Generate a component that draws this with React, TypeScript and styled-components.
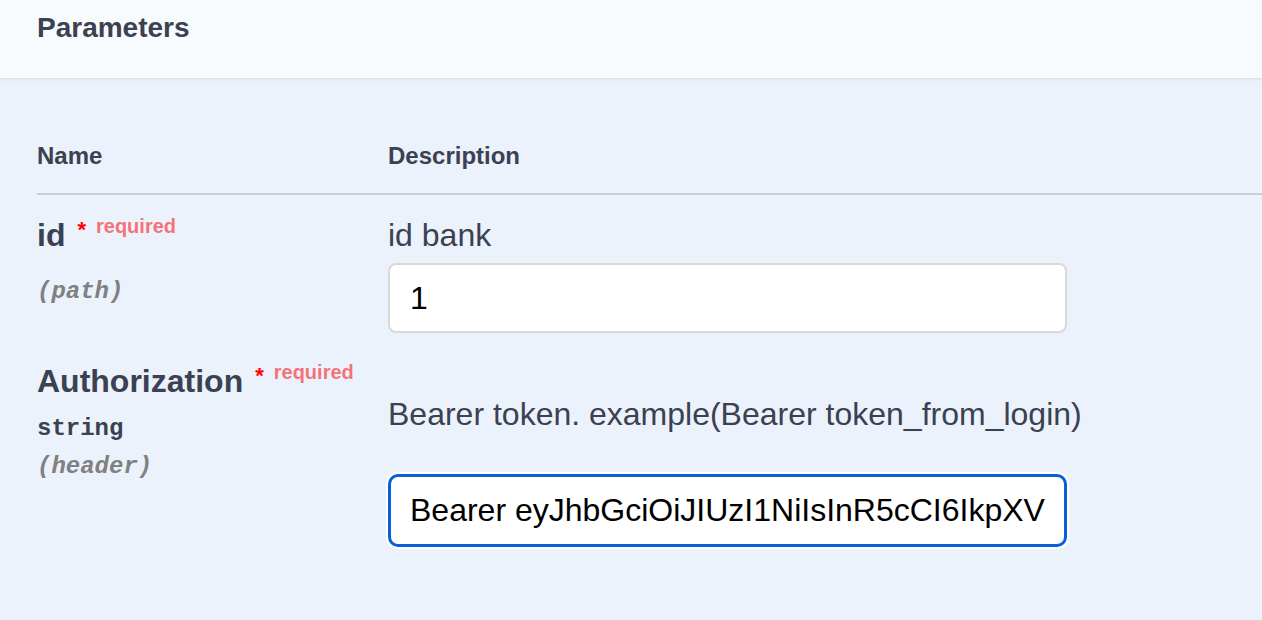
import React from "react";
import styled, { createGlobalStyle } from "styled-components";

const GlobalStyle = createGlobalStyle`
  html, body {
    margin: 0;
    padding: 0;
    background: #ebf2fb;
  }

  body {
    font-family: "Liberation Sans", Arial, sans-serif;
    color: #3b4151;
  }
`;

const Section = styled.div`
  min-height: 620px;
  background: #ebf2fb;
  overflow: hidden;
`;

const SectionHeader = styled.div`
  position: relative;
  height: 78px;
  box-sizing: border-box;
  padding: 10px 37px 0;
  background: #f8fbfe;
  box-shadow: 0 1px 3px rgba(0, 0, 0, 0.1);
`;

const Title = styled.h4`
  margin: 0;
  font-size: 28px;
  line-height: 36px;
  font-weight: 700;
  color: #3b4151;
`;

const Table = styled.div`
  margin-left: 37px;
  padding-top: 63px;
`;

const Row = styled.div<{ $head?: boolean }>`
  display: grid;
  grid-template-columns: 351px 1fr;
  padding: ${({ $head }) => ($head ? "0 0 22px" : "20px 0 8px")};
  border-bottom: ${({ $head }) =>
    $head ? "2px solid rgba(59, 65, 81, 0.2)" : "none"};
`;

const HeadCell = styled.div`
  font-size: 24px;
  line-height: 30px;
  font-weight: 700;
  color: #3b4151;
`;

const NameCol = styled.div`
  display: flex;
  flex-direction: column;
`;

const ParamName = styled.div`
  font-size: 32px;
  line-height: 40px;
  font-weight: 700;
  color: #3b4151;
  white-space: nowrap;
`;

const Star = styled.span`
  position: relative;
  top: -9px;
  margin-left: 12px;
  font-size: 22px;
  color: #ff0000;
`;

const Required = styled.span`
  position: relative;
  top: -13px;
  margin-left: 10px;
  font-size: 20px;
  font-weight: 700;
  color: rgba(255, 0, 0, 0.55);
`;

const TypeLine = styled.div`
  margin-top: 6px;
  font-family: "Liberation Mono", "Courier New", monospace;
  font-size: 24px;
  line-height: 36px;
  font-weight: 700;
  color: #3b4151;
`;

const InLine = styled.div<{ $gap: number }>`
  margin-top: ${({ $gap }) => $gap}px;
  font-family: "Liberation Mono", "Courier New", monospace;
  font-size: 24px;
  line-height: 36px;
  font-weight: 700;
  font-style: italic;
  color: #808080;
`;

const DescCol = styled.div`
  display: flex;
  flex-direction: column;
`;

const DescText = styled.p<{ $gap: number }>`
  margin: ${({ $gap }) => $gap}px 0 0;
  font-size: 32px;
  line-height: 40px;
  color: #3b4151;
  white-space: nowrap;
`;

const ParamInput = styled.input<{ $focused?: boolean; $gap: number }>`
  box-sizing: border-box;
  width: 679px;
  height: ${({ $focused }) => ($focused ? 73 : 70)}px;
  margin-top: ${({ $gap }) => $gap}px;
  padding: 0 ${({ $focused }) => ($focused ? 19 : 20)}px;
  font-family: "Liberation Sans", Arial, sans-serif;
  font-size: 32px;
  color: #000;
  background: #fff;
  border: ${({ $focused }) =>
    $focused ? "3px solid #0a5fd6" : "2px solid #d9d9d9"};
  border-radius: ${({ $focused }) => ($focused ? 10 : 8)}px;
  box-shadow: ${({ $focused }) => ($focused ? "0 0 0 2px #fff" : "none")};
  outline: none;
`;

const token =
  "Bearer eyJhbGciOiJIUzI1NiIsInR5cCI6IkpXVCJ9.eyJzdWIiOiIxMjM0NTY3ODkwIiwiaWF0IjoxNTE2MjM5MDIyfQ";

export default function App() {
  return (
    <>
      <GlobalStyle />
      <Section>
        <SectionHeader>
          <Title>Parameters</Title>
        </SectionHeader>
        <Table>
          <Row $head>
            <HeadCell>Name</HeadCell>
            <HeadCell>Description</HeadCell>
          </Row>

          <Row>
            <NameCol>
              <ParamName>
                id
                <Star>*</Star>
                <Required>required</Required>
              </ParamName>
              <InLine $gap={15}>(path)</InLine>
            </NameCol>
            <DescCol>
              <DescText $gap={0}>id bank</DescText>
              <ParamInput $gap={8} defaultValue="1" readOnly />
            </DescCol>
          </Row>

          <Row>
            <NameCol>
              <ParamName>
                Authorization
                <Star>*</Star>
                <Required>required</Required>
              </ParamName>
              <TypeLine>string</TypeLine>
              <InLine $gap={2}>(header)</InLine>
            </NameCol>
            <DescCol>
              <DescText $gap={33}>
                Bearer token. example(Bearer token_from_login)
              </DescText>
              <ParamInput $focused $gap={40} defaultValue={token} readOnly />
            </DescCol>
          </Row>
        </Table>
      </Section>
    </>
  );
}
